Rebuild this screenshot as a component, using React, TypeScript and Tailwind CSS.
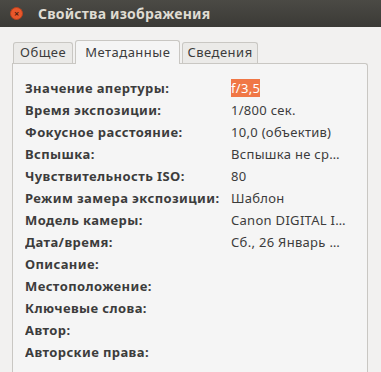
import React from 'react';

const rows: { label: string; value?: string; highlight?: boolean }[] = [
  { label: 'Значение апертуры:', value: 'f/3,5', highlight: true },
  { label: 'Время экспозиции:', value: '1/800 сек.' },
  { label: 'Фокусное расстояние:', value: '10,0 (объектив)' },
  { label: 'Вспышка:', value: 'Вспышка не ср…' },
  { label: 'Чувствительность ISO:', value: '80' },
  { label: 'Режим замера экспозиции:', value: 'Шаблон' },
  { label: 'Модель камеры:', value: 'Canon DIGITAL I…' },
  { label: 'Дата/время:', value: 'Сб., 26 Январь …' },
  { label: 'Описание:' },
  { label: 'Местоположение:' },
  { label: 'Ключевые слова:' },
  { label: 'Автор:' },
  { label: 'Авторские права:' },
];

const App: React.FC = () => {
  return (
    <div
      className="w-[381px] h-[372px] overflow-hidden bg-[#f2f1f0] text-[#3c3c3c] flex flex-col"
      style={{ fontFamily: '"Noto Sans", "Open Sans", "DejaVu Sans", sans-serif' }}
    >
      {/* title bar */}
      <div className="h-[27px] flex items-center bg-gradient-to-b from-[#4b4a45] to-[#3b3a36] shrink-0">
        <div className="ml-[10px] w-[13px] h-[13px] rounded-full bg-[#e9572b] border border-[#b9421e] flex items-center justify-center text-[#4a2010] text-[9px] leading-none font-bold">
          ×
        </div>
        <span className="ml-[15px] text-[14px] font-bold text-[#dfdbd2] tracking-[0.2px]">Свойства изображения</span>
      </div>

      {/* tabs */}
      <div className="mt-[13px] ml-[13px] flex items-end h-[23px] shrink-0 text-[13px] tracking-[0.5px]">
        <div className="h-[21px] px-[6px] flex items-center border border-b-0 border-[#c9c7c3] rounded-t-[3px] bg-[#ebeae8]">
          Общее
        </div>
        <div className="ml-[2px] h-[24px] px-[9px] flex items-center border border-b-0 border-[#c9c7c3] rounded-t-[3px] bg-[#f5f5f5] relative top-[1px] z-10">
          Метаданные
        </div>
        <div className="ml-[2px] h-[21px] px-[4px] flex items-center border border-b-0 border-[#c9c7c3] rounded-t-[3px] bg-[#ebeae8]">
          Сведения
        </div>
      </div>

      {/* panel */}
      <div className="ml-[12px] w-[356px] flex-1 bg-[#f5f5f5] border border-b-0 border-[#c9c7c3] rounded-tr-[3px] pt-[15px] pl-[12px] text-[13px]">
        <div className="grid grid-cols-[206px_130px] gap-y-[3px]">
          {rows.map((r) => (
            <React.Fragment key={r.label}>
              <div className="font-bold h-[19px] leading-[19px] whitespace-nowrap overflow-hidden tracking-[0.4px]">{r.label}</div>
              <div className="h-[19px] leading-[19px] whitespace-nowrap tracking-[0.3px]">
                {r.highlight ? <span className="bg-[#f07746] text-white">{r.value}</span> : r.value}
              </div>
            </React.Fragment>
          ))}
        </div>
      </div>
    </div>
  );
};

export default App;
